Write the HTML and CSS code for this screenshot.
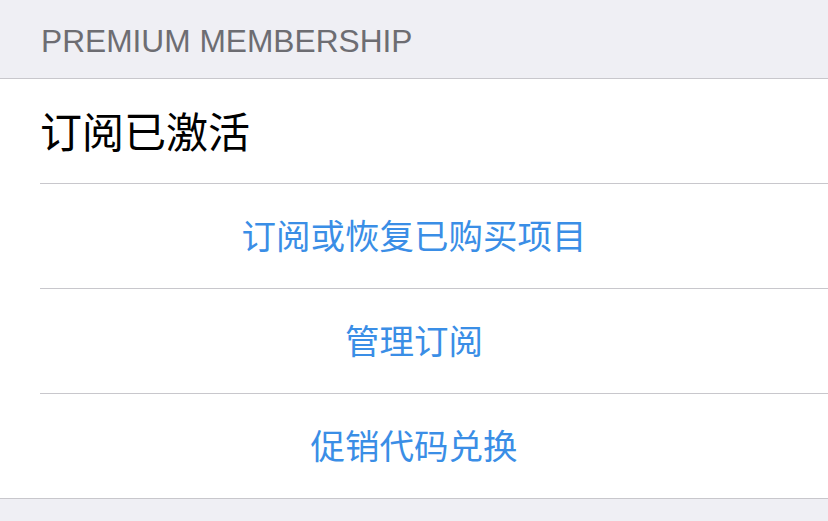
FILE: index.html
```html
<!DOCTYPE html>
<html lang="zh-CN">
<head>
    <meta charset="UTF-8">
    <meta name="viewport" content="width=device-width, initial-scale=1.0">
    <title>Premium Membership</title>
    <link rel="stylesheet" href="styles.css">
</head>
<body>
    <div class="section-header">PREMIUM MEMBERSHIP</div>
    <div class="list">
        <div class="row title-row">订阅已激活</div>
        <div class="row link-row">订阅或恢复已购买项目</div>
        <div class="row link-row">管理订阅</div>
        <div class="row link-row last">促销代码兑换</div>
    </div>
</body>
</html>
```

FILE: styles.css
```css
body {
    font-family: 'Liberation Sans', 'Noto Sans CJK SC', sans-serif;
    background-color: #efeff4;
    margin: 0;
    padding: 0;
}

.section-header {
    height: 79px;
    box-sizing: border-box;
    padding: 4px 0 0 41px;
    display: flex;
    align-items: center;
    font-size: 31.7px;
    color: #6d6d72;
    border-bottom: 1px solid #c8c7cc;
}

.list {
    background-color: #fff;
    border-bottom: 1px solid #c8c7cc;
}

.row {
    height: 105px;
    box-sizing: border-box;
    padding-bottom: 5px;
    display: flex;
    align-items: center;
    background: linear-gradient(#c8c7cc, #c8c7cc) no-repeat 40px 100% / calc(100% - 40px) 1px;
}

.row.last {
    height: 104px;
    padding-bottom: 4px;
    background: none;
}

.title-row {
    padding-left: 40px;
    font-size: 42px;
    color: #000;
}

.link-row {
    justify-content: center;
    font-size: 34.5px;
    color: #3a8ee6;
}
```
